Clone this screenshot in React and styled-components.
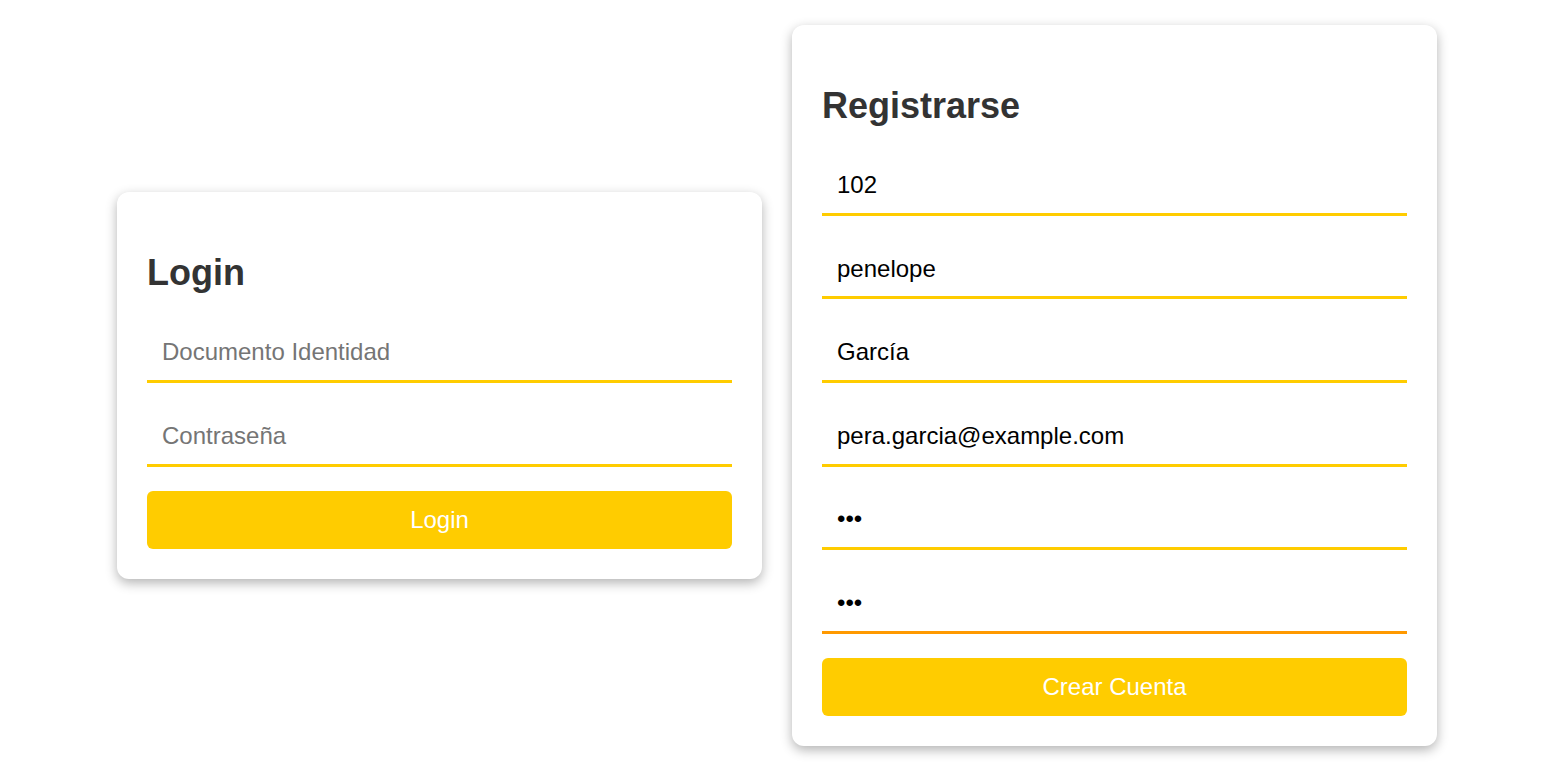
import React from "react";
import styled, { createGlobalStyle } from "styled-components";

const GlobalStyle = createGlobalStyle`
  * { box-sizing: border-box; }
  html, body { margin: 0; padding: 0; background: #ffffff; }
  body { font-family: "Liberation Sans", Arial, sans-serif; font-size: 24px; }
`;

const Page = styled.div`
  min-height: 100vh;
  display: flex;
  justify-content: center;
  align-items: center;
  gap: 30px;
`;

const Card = styled.form`
  width: 645px;
  background: #ffffff;
  border-radius: 12px;
  padding: 30px;
  box-shadow: 0 4px 12px rgba(0, 0, 0, 0.3);
  display: flex;
  flex-direction: column;
`;

const Title = styled.h2`
  font-family: "Liberation Sans", Arial, sans-serif;
  font-size: 36px;
  font-weight: 700;
  color: #333333;
  margin: 30px 0 30px;
  line-height: 41px;
`;

const Field = styled.input`
  display: block;
  width: 100%;
  font-family: "Liberation Sans", Arial, sans-serif;
  font-size: 24px;
  line-height: 27px;
  height: 59.6px;
  color: #000000;
  padding: 15px 15px 14px;
  margin: 0 0 24px;
  border: none;
  border-bottom: 3px solid ${(p) => (p.$focused ? "#ff9900" : "#ffcc00")};
  background: #ffffff;
  outline: none;
  &::placeholder { color: #757575; }
`;

const Submit = styled.button`
  width: 100%;
  height: 58px;
  font-family: "Liberation Sans", Arial, sans-serif;
  font-size: 24px;
  line-height: 28px;
  color: #ffffff;
  background: #ffcc00;
  border: none;
  border-radius: 6px;
  padding: 15px;
  cursor: pointer;
`;

export default function App() {
  const noop = (e) => e.preventDefault();
  return (
    <>
      <GlobalStyle />
      <Page>
        <Card onSubmit={noop}>
          <Title>Login</Title>
          <Field type="text" placeholder="Documento Identidad" />
          <Field type="password" placeholder="Contraseña" />
          <Submit type="submit">Login</Submit>
        </Card>
        <Card onSubmit={noop}>
          <Title>Registrarse</Title>
          <Field type="text" defaultValue="102" />
          <Field type="text" defaultValue="penelope" />
          <Field type="text" defaultValue="García" />
          <Field type="email" defaultValue="pera.garcia@example.com" />
          <Field type="password" defaultValue="123" />
          <Field type="password" defaultValue="123" $focused />
          <Submit type="submit">Crear Cuenta</Submit>
        </Card>
      </Page>
    </>
  );
}
